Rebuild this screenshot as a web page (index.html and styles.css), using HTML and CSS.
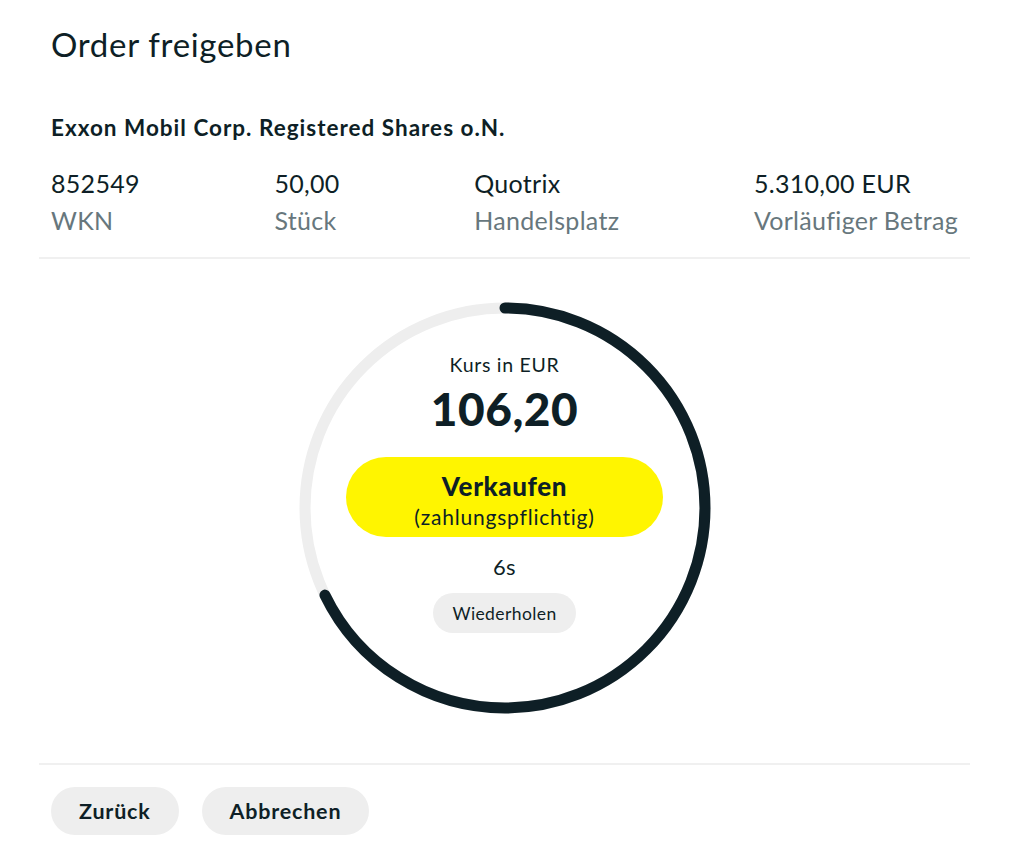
FILE: index.html
```html
<!DOCTYPE html>
<html lang="de">
<head>
<meta charset="utf-8">
<title>Order freigeben</title>
<link rel="stylesheet" href="styles.css">
</head>
<body>
<div class="dialog">
  <header class="head">
    <h1 class="title">Order freigeben</h1>
    <h2 class="instrument">Exxon Mobil Corp. Registered Shares o.N.</h2>
    <dl class="facts">
      <div class="fact"><dd class="value">852549</dd><dt class="label">WKN</dt></div>
      <div class="fact"><dd class="value">50,00</dd><dt class="label">Stück</dt></div>
      <div class="fact"><dd class="value">Quotrix</dd><dt class="label">Handelsplatz</dt></div>
      <div class="fact"><dd class="value">5.310,00 EUR</dd><dt class="label">Vorläufiger Betrag</dt></div>
    </dl>
  </header>
  <section class="quote">
    <div class="ring">
      <svg class="ring-svg" width="412" height="412" viewBox="0 0 412 412">
        <circle cx="206" cy="206" r="200" fill="none" stroke="#eeeeee" stroke-width="11"/>
        <circle cx="206" cy="206" r="200" fill="none" stroke="#0e1f26" stroke-width="11" stroke-linecap="round" stroke-dasharray="852 2000" transform="rotate(-90 206 206)"/>
      </svg>
      <div class="ring-content">
        <div class="kurs-label">Kurs in EUR</div>
        <div class="kurs">106,20</div>
        <button class="sell"><span class="sell-main">Verkaufen</span><span class="sell-sub">(zahlungspflichtig)</span></button>
        <div class="timer">6s</div>
        <button class="retry">Wiederholen</button>
      </div>
    </div>
  </section>
  <footer class="actions">
    <button class="btn">Zurück</button>
    <button class="btn">Abbrechen</button>
  </footer>
</div>
</body>
</html>
```
FILE: styles.css
```css
* { box-sizing: border-box; }
html, body { margin: 0; padding: 0; background: #ffffff; }
body {
  font-family: "Lato", "Noto Sans", sans-serif;
  color: #0e1f26;
}
.dialog {
  width: 931px;
  margin: 0 0 0 39px;
}
.head {
  padding: 0 12px;
  border-bottom: 2px solid #f0f0f0;
}
.title {
  margin: 0;
  padding-top: 24px;
  font-size: 33px;
  line-height: 40px;
  font-weight: 400;
  letter-spacing: 0.7px;
}
.instrument {
  margin: 50px 0 0;
  font-size: 22.5px;
  line-height: 28px;
  font-weight: 700;
  letter-spacing: 1px;
}
.facts {
  display: flex;
  justify-content: space-between;
  margin: 23px 0 0;
  padding-bottom: 18px;
}
.fact {
  display: flex;
  flex-direction: column;
}
.value, .label {
  margin: 0;
  font-size: 25px;
  line-height: 37px;
  letter-spacing: 0.3px;
}
.label { color: #67777d; }
.quote {
  display: flex;
  justify-content: center;
  padding: 43px 0 49px;
  border-bottom: 2px solid #f0f0f0;
}
.ring {
  display: grid;
  width: 412px;
  height: 412px;
}
.ring-svg, .ring-content { grid-area: 1 / 1; }
.ring-content {
  display: flex;
  flex-direction: column;
  align-items: center;
  padding-top: 51px;
}
.kurs-label {
  font-size: 19.5px;
  line-height: 24px;
  letter-spacing: 0.7px;
}
.kurs {
  margin-top: 6px;
  font-size: 46px;
  line-height: 52px;
  font-weight: 900;
  letter-spacing: 0.5px;
}
.sell {
  margin-top: 22px;
  width: 317px;
  height: 80px;
  padding: 14px 0 0;
  border: 0;
  border-radius: 40px;
  background: #fff500;
  color: #0e1f26;
  font-family: inherit;
  display: flex;
  flex-direction: column;
  align-items: center;
  justify-content: flex-start;
  gap: 3px;
}
.sell-main {
  font-size: 26px;
  line-height: 30px;
  font-weight: 900;
  letter-spacing: 0.6px;
}
.sell-sub {
  font-size: 21px;
  line-height: 26px;
  letter-spacing: 0.8px;
}
.timer {
  margin-top: 18px;
  font-size: 22px;
  line-height: 24px;
  letter-spacing: 0.3px;
}
.retry {
  margin-top: 14px;
  width: 143px;
  height: 40px;
  border: 0;
  border-radius: 20px;
  background: #eeeeee;
  color: #0e1f26;
  font-family: inherit;
  font-size: 17.5px;
  letter-spacing: 0.4px;
}
.actions {
  display: flex;
  gap: 23px;
  padding: 22px 12px 0;
}
.btn {
  height: 48px;
  padding: 0 28px;
  border: 0;
  border-radius: 24px;
  background: #eeeeee;
  color: #0e1f26;
  font-family: inherit;
  font-size: 21.5px;
  font-weight: 700;
  letter-spacing: 0.8px;
}
```
